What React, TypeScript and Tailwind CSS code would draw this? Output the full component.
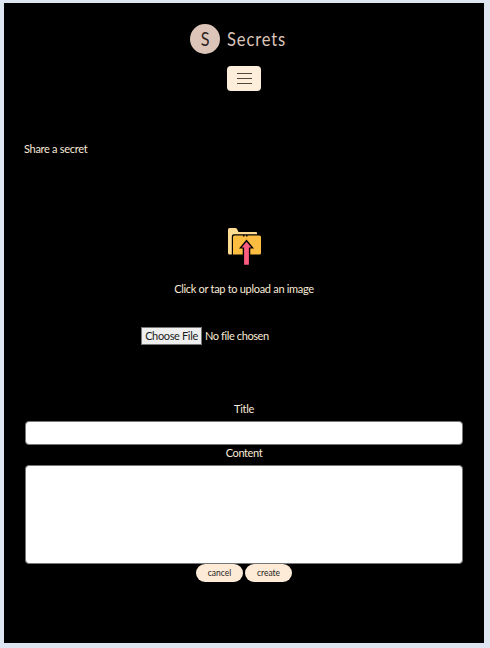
import React from "react";

function Logo() {
  return (
    <div className="flex h-[30px] items-center pl-[186px]">
      <div className="flex h-[30px] w-[30px] items-center justify-center rounded-full bg-[#dcc5b8] pb-[2px] text-[19px] leading-none text-[#2a1f1d]">
        <span className="inline-block scale-x-[0.85]">S</span>
      </div>
      <span className="ml-[7px] inline-block origin-left scale-x-[0.87] text-[19px] leading-[30px] tracking-[1px] text-[#dcc5b8]">
        Secrets
      </span>
    </div>
  );
}

function FolderUpload() {
  return (
    <svg width="34" height="38" viewBox="0 0 34 38" className="ml-[223.5px] block">
      <path d="M0 1.5Q0 0 1.5 0H7.5Q8.5 0 9 1L10.5 4H28Q29 4 29 5V6.2H6Q3.8 6.2 3.8 8.5V26.5H1.5Q0 26.5 0 25Z" fill="#ffdc91" />
      <path d="M5 9Q5 7.5 6.5 7.5H15V8.5H16.5V7.5H18V8.5H19.5V7.5H31.5Q33 7.5 33 9V25Q33 26.5 31.5 26.5H5Z" fill="#fdbd40" />
      <path d="M18.5 11.5L26 20.5H22.3V27H14.7V20.5H11Z" fill="#000" />
      <path d="M18.5 13.8L23.3 19.4H20.9V36.3Q20.9 36.8 20.5 36.8H16.5Q16.1 36.8 16.1 36.3V19.4H13.7Z" fill="#fb5b7e" />
    </svg>
  );
}

export default function App() {
  return (
    <div className="h-[648px] w-[490px] bg-[#dde6f1] pl-[4px] pt-[3px] font-['Lato','Noto_Sans',sans-serif] text-[11px] text-[#faebd7]">
      <main className="flex h-[640px] w-[480px] flex-col bg-black pt-[21px]">
        <Logo />
        <button aria-label="Menu" className="ml-[223px] mt-[12px] flex h-[25px] w-[34px] flex-col items-center justify-center gap-[4px] rounded-[4px] bg-[#fdeedb]">
          <span className="h-px w-[15px] bg-[#51483f]" />
          <span className="h-px w-[15px] bg-[#51483f]" />
          <span className="h-px w-[15px] bg-[#51483f]" />
        </button>
        <h1 className="ml-[20px] mt-[50px] h-[16px] leading-[16px] tracking-[-0.3px]">Share a secret</h1>
        <div className="mt-[71px] h-[38px]">
          <FolderUpload />
        </div>
        <p className="mt-[15px] h-[16px] text-center leading-[16px] tracking-[-0.3px]">Click or tap to upload an image</p>
        <div className="ml-[137px] mt-[30px] flex h-[18px] items-center">
          <button className="h-[18px] w-[61px] whitespace-nowrap border border-[#777] bg-[#efefef] text-center leading-[16px] tracking-[-0.35px] text-[#1c1c1c]">
            Choose File
          </button>
          <span className="ml-[3px] leading-[16px] tracking-[-0.4px]">No file chosen</span>
        </div>
        <label htmlFor="title" className="mt-[56px] h-[16px] text-center leading-[16px] tracking-[-0.3px]">Title</label>
        <input id="title" className="ml-[21px] mt-[4px] h-[24px] w-[438px] rounded-[4px] border border-[#777] bg-white text-black" />
        <label htmlFor="content" className="h-[16px] text-center leading-[16px] tracking-[-0.4px]">Content</label>
        <textarea id="content" className="ml-[21px] mt-[4px] h-[99px] w-[438px] resize-none rounded-[4px] border border-[#777] bg-white text-black" />
        <div className="flex h-[18px] gap-[2px] pl-[192px] text-[8.5px] leading-[18px] text-[#1c1c1c]">
          <button className="w-[47px] rounded-full bg-[#fdebd7]">cancel</button>
          <button className="w-[47px] rounded-full bg-[#fdebd7]">create</button>
        </div>
      </main>
    </div>
  );
}
